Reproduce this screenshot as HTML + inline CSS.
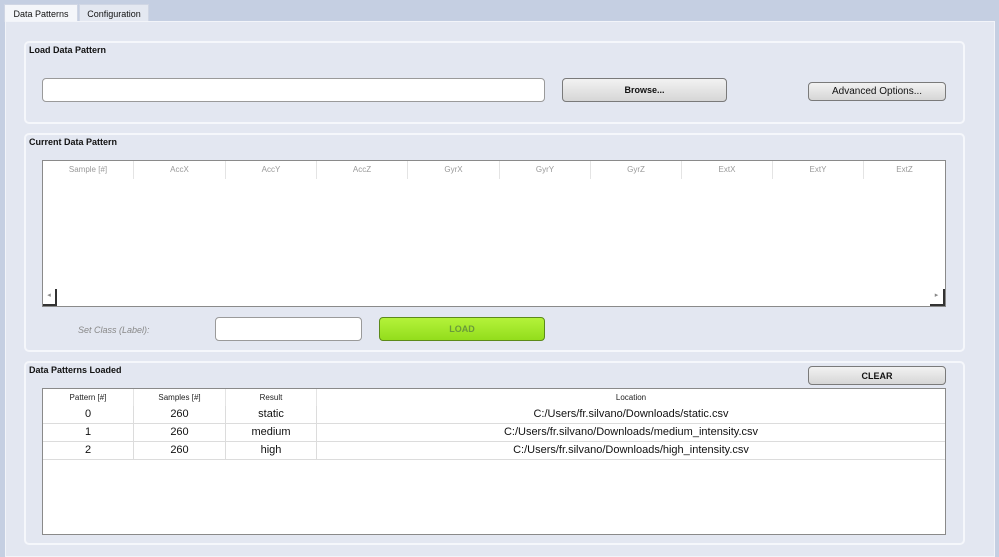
<!DOCTYPE html>
<html><head><style>
*{box-sizing:border-box;margin:0;padding:0}
body{width:999px;height:557px;background:#c5cfe2;font-family:"Liberation Sans","DejaVu Sans",sans-serif;position:relative;overflow:hidden}
.a{position:absolute}
.tab{position:absolute;top:4px;height:18px;font-size:9px;color:#111;text-align:center;line-height:18px;border:1px solid #d0d6e4;border-bottom:none}
.pane{left:5px;top:21px;width:990px;height:536px;background:#e3e7f1;border:1px solid #f2f4f9}
.grp{position:absolute;left:24px;width:941px;border:2px solid #f5f7fb;border-radius:5px}
.gt{position:absolute;left:29px;font-size:9px;font-weight:bold;color:#111}
.btn{position:absolute;border:1px solid #7a7a7a;border-radius:4px;background:linear-gradient(#f2f2f2,#d6d6d6);font-size:9px;text-align:center;color:#111}
.inp{position:absolute;background:#fff;border:1px solid #9a9a9a;border-radius:4px}
.tbl{position:absolute;background:#fff;border:1px solid #8a8a8a}
.hc{position:absolute;top:0;height:18px;line-height:18px;font-size:8px;color:#999;text-align:center;border-right:1px solid #e4e4e4}
.r{position:absolute;left:0;width:902px;height:18px;border-bottom:1px solid #dcdcdc;font-size:11px;color:#111;line-height:17px}
.r span{position:absolute;top:0;text-align:center;height:17px;border-right:1px solid #dcdcdc}
</style></head><body>
<div class="tab" style="left:4px;width:74px;background:#f4f6fa;">Data Patterns</div>
<div class="tab" style="left:79px;width:70px;background:#e4e8f1;">Configuration</div>
<div class="a pane"></div>

<div class="grp" style="top:41px;height:83px"></div>
<div class="gt" style="top:45px">Load Data Pattern</div>
<div class="inp" style="left:42px;top:78px;width:503px;height:24px"></div>
<div class="btn" style="left:562px;top:78px;width:165px;height:24px;line-height:22px;font-weight:bold">Browse...</div>
<div class="btn" style="left:808px;top:82px;width:138px;height:19px;line-height:18px;font-size:10px">Advanced Options...</div>

<div class="grp" style="top:133px;height:219px"></div>
<div class="gt" style="top:137px">Current Data Pattern</div>
<div class="tbl" style="left:42px;top:160px;width:904px;height:147px">
<div class="hc" style="left:0;width:91px">Sample [#]</div>
<div class="hc" style="left:91px;width:92px">AccX</div>
<div class="hc" style="left:183px;width:91px">AccY</div>
<div class="hc" style="left:274px;width:91px">AccZ</div>
<div class="hc" style="left:365px;width:92px">GyrX</div>
<div class="hc" style="left:457px;width:91px">GyrY</div>
<div class="hc" style="left:548px;width:91px">GyrZ</div>
<div class="hc" style="left:639px;width:91px">ExtX</div>
<div class="hc" style="left:730px;width:91px">ExtY</div>
<div class="hc" style="left:821px;width:81px;border:none">ExtZ</div>
<div class="a" style="left:0;top:128px;width:14px;height:17px;border-right:2px solid #333;border-bottom:2px solid #333;font-size:7px;color:#888;line-height:14px;text-align:center">◂</div>
<div class="a" style="left:887px;top:128px;width:15px;height:17px;border-right:2px solid #333;border-bottom:2px solid #333;font-size:7px;color:#888;line-height:14px;text-align:center">▸</div>
</div>
<div class="a" style="left:78px;top:325px;font-size:9px;font-style:italic;color:#888">Set Class (Label):</div>
<div class="inp" style="left:215px;top:317px;width:147px;height:24px"></div>
<div class="a" style="left:379px;top:317px;width:166px;height:24px;border:1px solid #5c8a1a;border-radius:4px;background:linear-gradient(#b4f23a,#93dd1c);font-size:9px;font-weight:bold;color:#6a9a3a;text-align:center;line-height:22px">LOAD</div>

<div class="grp" style="top:361px;height:184px"></div>
<div class="gt" style="top:365px">Data Patterns Loaded</div>
<div class="btn" style="left:808px;top:366px;width:138px;height:19px;line-height:18px;font-weight:bold">CLEAR</div>
<div class="tbl" style="left:42px;top:388px;width:904px;height:147px">
<div class="hc" style="left:0;width:91px;color:#222">Pattern [#]</div>
<div class="hc" style="left:91px;width:92px;color:#222">Samples [#]</div>
<div class="hc" style="left:183px;width:91px;color:#222">Result</div>
<div class="hc" style="left:274px;width:628px;color:#222;border:none">Location</div>
<div class="r" style="top:17px;border-top:none"><span style="left:0;width:91px">0</span><span style="left:91px;width:92px">260</span><span style="left:183px;width:91px">static</span><span style="left:274px;width:628px;border:none">C:/Users/fr.silvano/Downloads/static.csv</span></div>
<div class="r" style="top:35px"><span style="left:0;width:91px">1</span><span style="left:91px;width:92px">260</span><span style="left:183px;width:91px">medium</span><span style="left:274px;width:628px;border:none">C:/Users/fr.silvano/Downloads/medium_intensity.csv</span></div>
<div class="r" style="top:53px"><span style="left:0;width:91px">2</span><span style="left:91px;width:92px">260</span><span style="left:183px;width:91px">high</span><span style="left:274px;width:628px;border:none">C:/Users/fr.silvano/Downloads/high_intensity.csv</span></div>
</div>
</body></html>
